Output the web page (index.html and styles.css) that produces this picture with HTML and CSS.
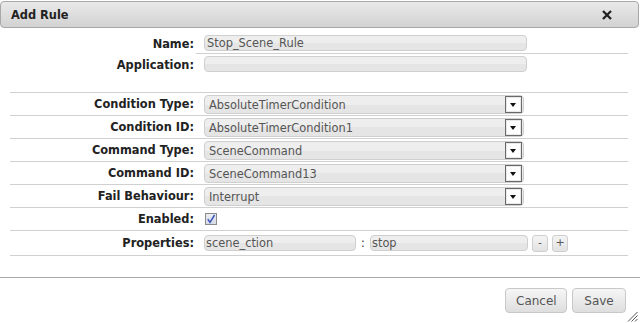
FILE: index.html
```html
<!DOCTYPE html>
<html lang="en">
<head>
    <meta charset="UTF-8">
    <title>Add Rule</title>
    <link rel="stylesheet" href="styles.css">
</head>
<body>
<div class="dialog">
    <div class="titlebar">
        <span class="title">Add Rule</span>
        <svg class="close" width="10" height="10" viewBox="0 0 10 10">
            <path d="M1.8 1.8 L8.2 8.2 M8.2 1.8 L1.8 8.2" stroke="#222" stroke-width="2.3" stroke-linecap="square"/>
        </svg>
    </div>

    <div class="content">
        <!-- Rule info -->
        <div class="row top-row">
            <div class="label">Name:</div>
            <div class="field underline"><div class="input wide">Stop_Scene_Rule</div></div>
        </div>
        <div class="row top-row">
            <div class="label">Application:</div>
            <div class="field"><div class="input wide"></div></div>
        </div>

        <!-- Rule settings -->
        <div class="group">
            <div class="row">
                <div class="label">Condition Type:</div>
                <div class="field"><div class="select"><span>AbsoluteTimerCondition</span><i class="arrow"></i></div></div>
            </div>
            <div class="row">
                <div class="label">Condition ID:</div>
                <div class="field"><div class="select"><span>AbsoluteTimerCondition1</span><i class="arrow"></i></div></div>
            </div>
            <div class="row">
                <div class="label">Command Type:</div>
                <div class="field"><div class="select"><span>SceneCommand</span><i class="arrow"></i></div></div>
            </div>
            <div class="row">
                <div class="label">Command ID:</div>
                <div class="field"><div class="select"><span>SceneCommand13</span><i class="arrow"></i></div></div>
            </div>
            <div class="row">
                <div class="label">Fail Behaviour:</div>
                <div class="field"><div class="select"><span>Interrupt</span><i class="arrow"></i></div></div>
            </div>
            <div class="row">
                <div class="label">Enabled:</div>
                <div class="field">
                    <span class="checkbox">
                        <svg width="10" height="10" viewBox="0 0 10 10">
                            <path d="M1.8 5.2 L4 8.4 L8.6 1" stroke="#3b55b8" stroke-width="1.5" fill="none"/>
                        </svg>
                    </span>
                </div>
            </div>
            <div class="row prop-row">
                <div class="label">Properties:</div>
                <div class="field">
                    <div class="input key">scene_ction</div>
                    <span class="colon">:</span>
                    <div class="input value">stop</div>
                    <span class="small-btn">-</span>
                    <span class="small-btn">+</span>
                </div>
            </div>
        </div>
    </div>

    <div class="footer">
        <button type="button" class="btn cancel">Cancel</button>
        <button type="button" class="btn save">Save</button>
        <svg class="grip" width="11" height="11" viewBox="0 0 11 11">
            <path d="M10.5 1 L1 10.5 M10.5 4.5 L4.5 10.5 M10.5 8 L8 10.5" stroke="#555" stroke-width="1"/>
        </svg>
    </div>
</div>
</body>
</html>
```

FILE: styles.css
```css
body {
    margin: 0;
    padding: 0;
    font-family: "DejaVu Sans", Verdana, sans-serif;
    font-size: 11.4px;
    color: #222;
    background: #fff;
}
.dialog {
    width: 640px;
    height: 323px;
    position: relative;
    overflow: hidden;
}
.titlebar {
    margin: 1px 1px 0 0;
    height: 25px;
    border: 1px solid #a8a8a8;
    border-radius: 4px;
    background: linear-gradient(#e9e9e9, #d2d2d2);
    display: flex;
    align-items: center;
    justify-content: space-between;
    padding: 0 26px 0 10px;
}
.title {
    font-weight: bold;
    color: #222;
}
.close {
    display: block;
}
.content {
    height: 249px;
    padding: 5px 12px 0 10px;
    box-sizing: border-box;
}
.row {
    display: flex;
    align-items: stretch;
    height: 22px;
    border-bottom: 1px solid #d0d0d0;
}
.top-row {
    height: 21px;
    border-bottom: none;
}
.top-row .field {
    border-bottom: 1px solid transparent;
}
.top-row .field.underline {
    border-bottom-color: #d0d0d0;
}
.group {
    margin-top: 17px;
    border-top: 1px solid #d0d0d0;
}
.prop-row {
    height: 24px;
}
.label {
    width: 184px;
    padding-right: 2px;
    text-align: right;
    font-weight: bold;
    display: flex;
    align-items: center;
    justify-content: flex-end;
}
.field {
    flex: 1;
    display: flex;
    align-items: center;
    padding-left: 8px;
}
.input {
    height: 14px;
    line-height: 14px;
    border: 1px solid #cfcfcf;
    border-radius: 4px;
    background: linear-gradient(#eeeeee 50%, #e5e5e5 50%);
    color: #555;
    padding-left: 2px;
    box-sizing: content-box;
}
.input.wide {
    width: 319px;
}
.input.key {
    width: 149px;
    padding-left: 1px;
}
.input.value {
    width: 155px;
    padding-left: 1px;
}
.colon {
    width: 14px;
    text-align: center;
    color: #333;
}
.select {
    width: 313px;
    height: 17px;
    border: 1px solid #cfcfcf;
    border-radius: 4px;
    background: linear-gradient(#eeeeee 50%, #e5e5e5 50%);
    color: #555;
    display: flex;
    align-items: center;
    justify-content: space-between;
    padding-left: 4px;
    padding-right: 1px;
    box-sizing: content-box;
    margin-top: 1px;
}
.arrow {
    width: 15px;
    height: 15px;
    border: 1px solid #6a6a6a;
    background: #fff;
    box-shadow: inset 0 0 0 1px #e8e8e8;
    position: relative;
}
.arrow::after {
    content: "";
    position: absolute;
    left: 4px;
    top: 6px;
    border-left: 3.5px solid transparent;
    border-right: 3.5px solid transparent;
    border-top: 4px solid #111;
}
.checkbox {
    width: 10px;
    height: 10px;
    border: 1px solid #8a8a8a;
    background: linear-gradient(#e9ecf3, #d8dce6);
    display: flex;
    align-items: center;
    justify-content: center;
    margin-left: 1px;
}
.checkbox svg {
    display: block;
}
.small-btn {
    width: 14px;
    height: 15px;
    margin-left: 4px;
    border: 1px solid #cfcfcf;
    border-radius: 3px;
    background: linear-gradient(#f4f4f4, #e2e2e2);
    color: #555;
    font-size: 11px;
    line-height: 14px;
    text-align: center;
}
.footer {
    border-top: 1px solid #a8a8a8;
    height: 45px;
    display: flex;
    justify-content: flex-end;
    align-items: flex-start;
    gap: 5px;
    padding: 10px 14px 0 0;
    box-sizing: border-box;
}
.btn {
    height: 25px;
    padding: 0 10px;
    border: 1px solid #c8c8c8;
    border-radius: 4px;
    background: linear-gradient(#f6f6f6, #dedede);
    color: #555;
    font-family: "DejaVu Sans", Verdana, sans-serif;
    font-size: 12px;
}
.btn.cancel {
    width: 62px;
}
.btn.save {
    width: 54px;
}
.grip {
    position: absolute;
    right: 2px;
    bottom: 1px;
}
```
